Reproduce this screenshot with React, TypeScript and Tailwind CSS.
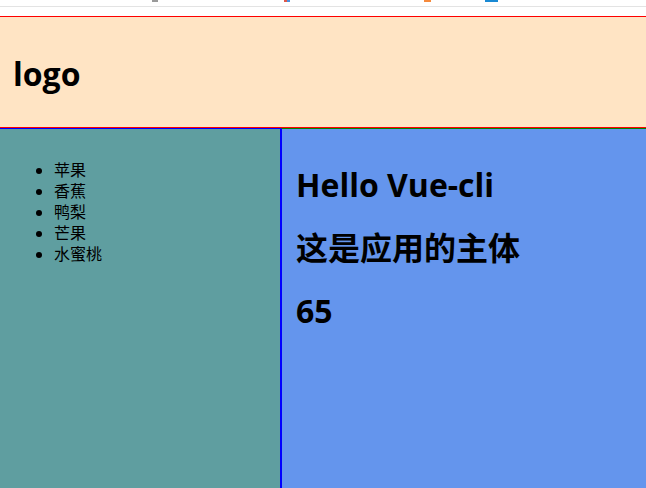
const fruits = ['苹果', '香蕉', '鸭梨', '芒果', '水蜜桃'];

export default function App() {
  return (
    <div
      className="flex h-screen flex-col overflow-hidden bg-white text-black"
      style={{ fontFamily: '"Open Sans", "Noto Sans CJK SC", sans-serif' }}
    >
      {/* leftover browser chrome */}
      <div className="h-[16px] shrink-0 bg-white">
        <div className="flex h-[7px] items-start border-b border-[#e3e3e3] pl-[152px]">
          <span className="h-[2px] w-[6px] bg-[#9a9a9a]" />
          <span className="ml-[126px] h-[2px] w-[3px] bg-[#e0584a]" />
          <span className="h-[2px] w-[3px] bg-[#4a8fe0]" />
          <span className="ml-[134px] h-[2px] w-[7px] bg-[#f68a3c]" />
          <span className="ml-[54px] h-[2px] w-[13px] bg-[#1a8ad4]" />
        </div>
      </div>

      <header className="h-[112px] shrink-0 border-y border-[#ff0000] bg-[#ffe4c4] px-[13px] pt-[15px]">
        <h1 className="mt-[21px] text-[32px] font-bold leading-[42px]">logo</h1>
      </header>

      <div className="flex min-h-0 flex-1">
        <aside className="w-[281px] shrink-0 border-r border-t border-[#0000ff] bg-[#5f9ea0] px-[14px] pt-[15px]">
          <ul className="mt-[16px] list-disc pl-[40px] text-[16px] leading-[21px]">
            {fruits.map((f) => (
              <li key={f}>{f}</li>
            ))}
          </ul>
        </aside>
        <main className="flex-1 border-l border-t border-l-[#0000ff] border-t-[#008000] bg-[#6495ed] px-[14px] pt-[14px]">
          <h1 className="my-[21px] text-[32px] font-bold leading-[42px]">Hello Vue-cli</h1>
          <h1 className="my-[21px] text-[32px] font-bold leading-[42px]">这是应用的主体</h1>
          <h1 className="my-[21px] text-[32px] font-bold leading-[42px]">65</h1>
        </main>
      </div>
    </div>
  );
}
